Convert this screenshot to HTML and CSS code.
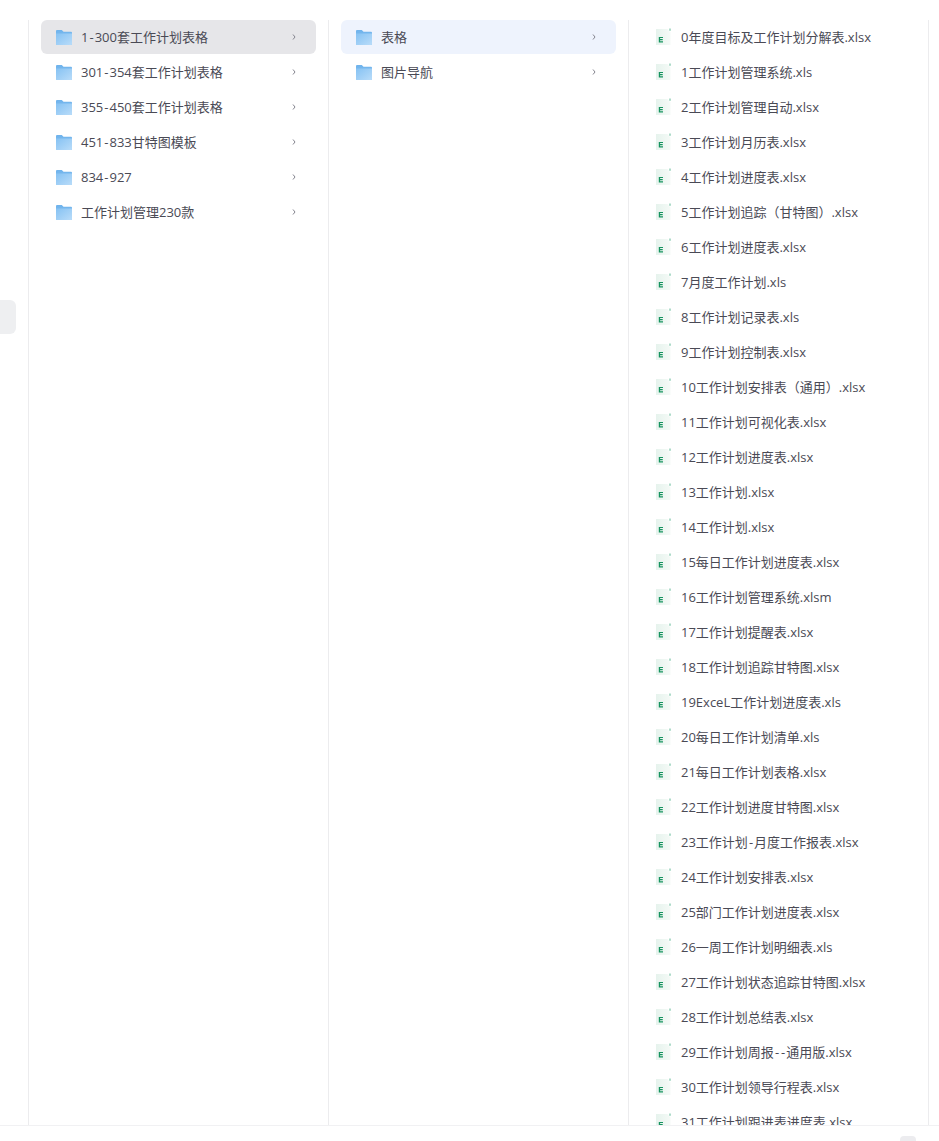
FILE: index.html
```html
<!DOCTYPE html>
<html lang="en">
<head>
    <meta charset="UTF-8">
    <meta name="viewport" content="width=device-width, initial-scale=1.0">
    <title>文件列表</title>
    <link rel="stylesheet" href="styles.css">
</head>
<body>
    <svg class="defs" width="0" height="0" aria-hidden="true">
        <defs>
            <linearGradient id="folderBack" x1="0" y1="0" x2="0" y2="1">
                <stop offset="0" stop-color="#6fb3ec"/>
                <stop offset="1" stop-color="#8cc4f2"/>
            </linearGradient>
            <linearGradient id="folderFront" x1="0" y1="0" x2="1" y2="1">
                <stop offset="0" stop-color="#86c2f3"/>
                <stop offset="1" stop-color="#b9dcf9"/>
            </linearGradient>
            <linearGradient id="excelPage" x1="0" y1="0" x2="1" y2="0">
                <stop offset="0" stop-color="#e6f3ed"/>
                <stop offset="1" stop-color="#f5faf7"/>
            </linearGradient>
            <symbol id="folder" viewBox="0 0 16 15">
                <path d="M1 0h4.800l1.700 1.800H15a1 1 0 0 1 1 1V14a1 1 0 0 1-1 1H1a1 1 0 0 1-1-1V1a1 1 0 0 1 1-1z" fill="url(#folderBack)"/>
                <path d="M0 3.500h16V14a1 1 0 0 1-1 1H1a1 1 0 0 1-1-1z" fill="url(#folderFront)"/>
            </symbol>
            <symbol id="excel" viewBox="0 0 16 18">
                <path d="M0 1h11.500l3 3.500V17H0z" fill="url(#excelPage)"/>
                <path d="M14 0.500v2.300" stroke="#5fb896" stroke-width="1" fill="none"/>
                <path d="M2.800 9h4.200v1.100H4.100v1h2.600v1.100H4.100v1.100H7v1.100H2.800z" fill="#16935f"/>
            </symbol>
            <symbol id="chevron" viewBox="0 0 6 10">
                <path d="M2 2.500L4 5L2 7.500" fill="none" stroke="#85858f" stroke-width="1"/>
            </symbol>
        </defs>
    </svg>

    <div class="side-tab"></div>

    <div class="browser">
        <div class="column">
            <div class="row row-active"><svg class="folder-icon"><use href="#folder"/></svg><span class="name">1<span class="dash">-</span>300套工作计划表格</span><svg class="chevron"><use href="#chevron"/></svg></div>
            <div class="row"><svg class="folder-icon"><use href="#folder"/></svg><span class="name">301<span class="dash">-</span>354套工作计划表格</span><svg class="chevron"><use href="#chevron"/></svg></div>
            <div class="row"><svg class="folder-icon"><use href="#folder"/></svg><span class="name">355<span class="dash">-</span>450套工作计划表格</span><svg class="chevron"><use href="#chevron"/></svg></div>
            <div class="row"><svg class="folder-icon"><use href="#folder"/></svg><span class="name">451<span class="dash">-</span>833甘特图模板</span><svg class="chevron"><use href="#chevron"/></svg></div>
            <div class="row"><svg class="folder-icon"><use href="#folder"/></svg><span class="name">834<span class="dash">-</span>927</span><svg class="chevron"><use href="#chevron"/></svg></div>
            <div class="row"><svg class="folder-icon"><use href="#folder"/></svg><span class="name">工作计划管理230款</span><svg class="chevron"><use href="#chevron"/></svg></div>
        </div>

        <div class="column">
            <div class="row row-selected"><svg class="folder-icon"><use href="#folder"/></svg><span class="name">表格</span><svg class="chevron"><use href="#chevron"/></svg></div>
            <div class="row"><svg class="folder-icon"><use href="#folder"/></svg><span class="name">图片导航</span><svg class="chevron"><use href="#chevron"/></svg></div>
        </div>

        <div class="column column-last" id="fileColumn"></div>
    </div>

    <div class="footer">
        <div class="footer-btn"></div>
    </div>

    <script>
        const files = [
            '0年度目标及工作计划分解表.xlsx', '1工作计划管理系统.xls', '2工作计划管理自动.xlsx',
            '3工作计划月历表.xlsx', '4工作计划进度表.xlsx', '5工作计划追踪（甘特图）.xlsx',
            '6工作计划进度表.xlsx', '7月度工作计划.xls', '8工作计划记录表.xls',
            '9工作计划控制表.xlsx', '10工作计划安排表（通用）.xlsx', '11工作计划可视化表.xlsx',
            '12工作计划进度表.xlsx', '13工作计划.xlsx', '14工作计划.xlsx',
            '15每日工作计划进度表.xlsx', '16工作计划管理系统.xlsm', '17工作计划提醒表.xlsx',
            '18工作计划追踪甘特图.xlsx', '19ExceL工作计划进度表.xls', '20每日工作计划清单.xls',
            '21每日工作计划表格.xlsx', '22工作计划进度甘特图.xlsx', '23工作计划-月度工作报表.xlsx',
            '24工作计划安排表.xlsx', '25部门工作计划进度表.xlsx', '26一周工作计划明细表.xls',
            '27工作计划状态追踪甘特图.xlsx', '28工作计划总结表.xlsx', '29工作计划周报--通用版.xlsx',
            '30工作计划领导行程表.xlsx', '31工作计划跟进表进度表.xlsx'
        ];
        const fileColumn = document.getElementById('fileColumn');
        files.forEach(function(file) {
            const row = document.createElement('div');
            row.className = 'row';
            // hyphens get their own span, they run wider than the font's
            row.innerHTML = '<svg class="excel-icon"><use href="#excel"/></svg><span class="name">' +
                file.replace(/-/g, '<span class="dash">-</span>') + '</span>';
            fileColumn.appendChild(row);
        });
    </script>
</body>
</html>
```

FILE: styles.css
```css
html, body {
    margin: 0;
    height: 100%;
}
body {
    position: relative;
    display: flex;
    flex-direction: column;
    height: 1141px;
    overflow: hidden;
    background: #fff;
    font-family: "Open Sans", "Noto Sans CJK SC", sans-serif;
    font-size: 13px;
    color: #4a4a55;
}
.defs {
    position: absolute;
}
.browser {
    display: flex;
    flex: 1;
    min-height: 0;
    margin-left: 28px;
    padding-top: 20px;
    overflow: hidden;
}
.column {
    width: 300px;
    flex-shrink: 0;
    box-sizing: border-box;
    border-left: 1px solid #ececee;
    padding: 0 12px;
    overflow: hidden;
}
.column-last {
    width: 301px;
    border-right: 1px solid #ececee;
}
.row {
    display: flex;
    align-items: center;
    width: 275px;
    height: 34px;
    margin-bottom: 1px;
    padding-left: 14px;
    box-sizing: border-box;
    border-radius: 6px;
}
.row-active {
    background: #e6e6e9;
}
.row-selected {
    background: #eef3fd;
}
.folder-icon {
    width: 16px;
    height: 15px;
    flex-shrink: 0;
    margin: 0 9px 0 1px;
}
.excel-icon {
    width: 16px;
    height: 18px;
    flex-shrink: 0;
    margin: 0 9px 0 1px;
}
.name {
    flex: 1;
    white-space: nowrap;
    line-height: 20px;
}
.dash {
    padding: 0 1px;
}
.chevron {
    width: 6px;
    height: 10px;
    flex-shrink: 0;
    margin-right: 19px;
}
.footer {
    flex-shrink: 0;
    display: flex;
    justify-content: flex-end;
    height: 15px;
    border-top: 1px solid #f1f1f3;
    overflow: hidden;
}
.footer-btn {
    width: 16px;
    height: 16px;
    margin: 10px 23px 0 0;
    border-radius: 4px;
    background: #ececef;
}
.side-tab {
    position: absolute;
    left: 0;
    top: 300px;
    width: 16px;
    height: 34px;
    border-radius: 0 6px 6px 0;
    background: #eeeff1;
}
```
